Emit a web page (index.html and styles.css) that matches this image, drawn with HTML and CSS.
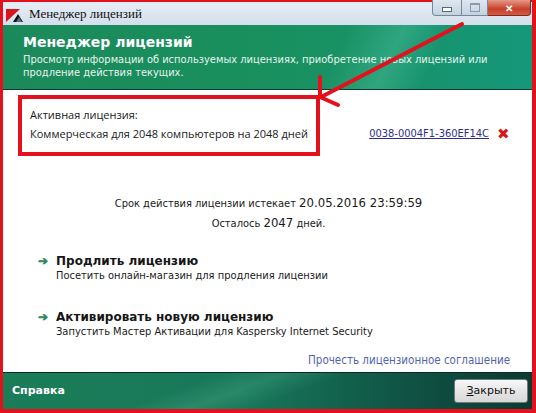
FILE: index.html
```html
<!DOCTYPE html>
<html lang="ru">
<head>
<meta charset="UTF-8">
<title>Менеджер лицензий</title>
<link rel="stylesheet" href="styles.css">
</head>
<body>

<div class="window">
  <div class="titlebar">
    <svg class="app-icon" width="18" height="14" viewBox="0 0 18 14">
      <polygon points="0,0 14,0 0,13" fill="#d8141c"/>
      <polygon points="7,13 12,5 17,13" fill="#111"/>
      <polygon points="10,13 13,8 16,13" fill="#5a6a80"/>
    </svg>
    <span class="title-text">Менеджер лицензий</span>
    <div class="win-buttons">
      <span class="wbtn min"><i></i></span>
      <span class="wbtn max"><i></i></span>
      <span class="wbtn close">&#x2715;</span>
    </div>
  </div>

  <div class="header">
    <h1>Менеджер лицензий</h1>
    <p>Просмотр информации об используемых лицензиях, приобретение новых лицензий или продление действия текущих.</p>
  </div>

  <div class="content">
    <div class="license">
      <div class="license-info">
        <div>Активная лицензия:</div>
        <div>Коммерческая для 2048 компьютеров на 2048 дней</div>
      </div>
      <div class="license-key">
        <a href="#">0038-0004F1-360EF14C</a>
        <span class="remove">&#x2716;</span>
      </div>
    </div>

    <div class="expiry">
      <div>Срок действия лицензии истекает <b>20.05.2016 23:59:59</b></div>
      <div>Осталось <b>2047</b> дней.</div>
    </div>

    <div class="actions">
      <div class="action">
        <span class="go">&#x2794;</span>
        <div>
          <div class="action-title">Продлить лицензию</div>
          <div class="action-sub">Посетить онлайн-магазин для продления лицензии</div>
        </div>
      </div>
      <div class="action">
        <span class="go">&#x2794;</span>
        <div>
          <div class="action-title">Активировать новую лицензию</div>
          <div class="action-sub">Запустить Мастер Активации для Kaspersky Internet Security</div>
        </div>
      </div>
    </div>

    <div class="agreement"><a href="#">Прочесть лицензионное соглашение</a></div>
  </div>

  <div class="footer">
    <span class="help">Справка</span>
    <button><u>З</u>акрыть</button>
  </div>
</div>

<!-- annotation drawn over the screenshot -->
<svg class="marks" width="536" height="413" viewBox="0 0 536 413">
  <rect x="20" y="97" width="298" height="57" fill="none" stroke="#e3111b" stroke-width="4"/>
  <g stroke="#e3111b" stroke-width="4" stroke-linecap="round" fill="none">
    <line x1="462" y1="24" x2="321" y2="97"/>
    <line x1="320" y1="97" x2="320" y2="77"/>
    <line x1="320" y1="97" x2="338" y2="105"/>
  </g>
</svg>

</body>
</html>
```

FILE: styles.css
```css
body {
  margin: 0;
  width: 536px;
  height: 413px;
  box-sizing: border-box;
  padding: 2px 4px 4px 3px;
  background-color: #e3111b;
  font-family: "Open Sans", Arial, sans-serif;
  font-size: 12px;
  color: #1a1a1a;
  position: relative;
  overflow: hidden;
}

.window {
  display: flex;
  flex-direction: column;
  height: 100%;
}

.titlebar {
  height: 23px;
  display: flex;
  align-items: center;
  background: linear-gradient(#e7eef6, #d3dfeb);
  padding-left: 3px;
  position: relative;
}

.app-icon {
  margin-right: 5px;
  margin-top: 4px;
}

.title-text {
  font-family: "Liberation Serif", serif;
  font-size: 13px;
  color: #111;
  margin-top: 1px;
}

.win-buttons {
  position: absolute;
  top: -2px;
  right: 1px;
  display: flex;
}

.wbtn {
  height: 15px;
  display: flex;
  align-items: center;
  justify-content: center;
  border: 1px solid #76879a;
  border-top: none;
  background: linear-gradient(#dfe7f0, #c4d2e0);
}

.wbtn.min {
  width: 28px;
  border-radius: 0 0 0 4px;
}

.wbtn.min i {
  width: 8px;
  height: 3px;
  background: #fff;
  border: 1px solid #56677a;
  margin-top: 3px;
}

.wbtn.max {
  width: 25px;
  border-left: none;
}

.wbtn.max i {
  width: 8px;
  height: 6px;
  border: 1px solid #8c9aab;
  border-top-width: 2px;
}

.wbtn.close {
  width: 42px;
  border-left: none;
  border-color: #7a2a20;
  border-radius: 0 0 4px 0;
  background: linear-gradient(#e59a88, #c7402c 60%, #d45a40);
  color: #fff;
  font-size: 10px;
  font-weight: bold;
}

.header {
  height: 65px;
  box-sizing: border-box;
  padding: 8px 20px 0 20px;
  border-bottom: 1px solid #123a2a;
  background:
    linear-gradient(115deg, transparent 62%, rgba(120, 220, 190, 0.25) 72%, transparent 80%),
    linear-gradient(90deg, #1b8a5a, #19905f 55%, #15977a);
  color: #fff;
}

.header h1 {
  margin: 0;
  font-family: "DejaVu Sans", sans-serif;
  font-size: 14px;
  line-height: 18px;
  font-weight: bold;
}

.header p {
  margin: 2px 0 0;
  font-family: "DejaVu Sans Condensed", "DejaVu Sans", sans-serif;
  font-size: 11px;
  line-height: 13px;
  color: #e6f4ee;
}

.content {
  flex: 1;
  background-color: #fff;
  padding: 15px 22px 0 27px;
  display: flex;
  flex-direction: column;
}

.license {
  display: flex;
  justify-content: space-between;
  line-height: 19px;
  font-size: 11px;
}

.license-key {
  align-self: flex-end;
  display: flex;
  align-items: center;
  gap: 8px;
}

.license-key a {
  color: #2e2e8c;
  font-family: "DejaVu Sans Condensed", "DejaVu Sans", sans-serif;
  font-size: 11px;
}

.remove {
  color: #d81818;
  font-size: 15px;
}

.expiry {
  margin-top: 50px;
  text-align: center;
  line-height: 19px;
  font-family: "DejaVu Sans Condensed", "DejaVu Sans", sans-serif;
  font-size: 11px;
  margin-left: -3px;
}

.expiry b {
  font-weight: normal;
  font-size: 13px;
}

.actions {
  margin-top: 20px;
  padding-left: 8px;
  display: flex;
  flex-direction: column;
  gap: 26px;
}

.action {
  display: flex;
  gap: 8px;
}

.go {
  color: #2a8a5a;
  font-size: 12px;
  line-height: 16px;
  font-weight: bold;
}

.action-title {
  font-family: "DejaVu Sans", sans-serif;
  font-weight: bold;
  font-size: 12px;
  line-height: 16px;
  color: #161616;
}

.action-sub {
  font-family: "DejaVu Sans Condensed", "DejaVu Sans", sans-serif;
  font-size: 11px;
  line-height: 14px;
}

.agreement {
  margin-top: 12px;
  text-align: right;
}

.agreement a {
  color: #5264b0;
  text-decoration: none;
  font-family: "DejaVu Sans Condensed", "DejaVu Sans", sans-serif;
  font-size: 11.5px;
}

.footer {
  height: 37px;
  box-sizing: border-box;
  border-top: 1px solid #0c2a22;
  padding: 0 4px 0 9px;
  display: flex;
  align-items: center;
  justify-content: space-between;
  background:
    linear-gradient(160deg, transparent 35%, rgba(120, 210, 170, 0.18) 45%, transparent 55%),
    linear-gradient(90deg, #1a7d58, #17785a 45%, #0f4f42 80%, #0b3a33);
}

.help {
  color: #fff;
  font-family: "DejaVu Sans", sans-serif;
  font-size: 11px;
  font-weight: bold;
  margin-top: -1px;
}

button {
  width: 74px;
  height: 24px;
  margin-top: -1px;
  border: 1px solid #6f7a80;
  border-radius: 3px;
  background: linear-gradient(#f7f7f7, #e6e6e6 50%, #d8d8d8);
  font-family: "DejaVu Sans", sans-serif;
  font-size: 11px;
  color: #111;
}

.marks {
  position: absolute;
  top: 0;
  left: 0;
  pointer-events: none;
}
```
